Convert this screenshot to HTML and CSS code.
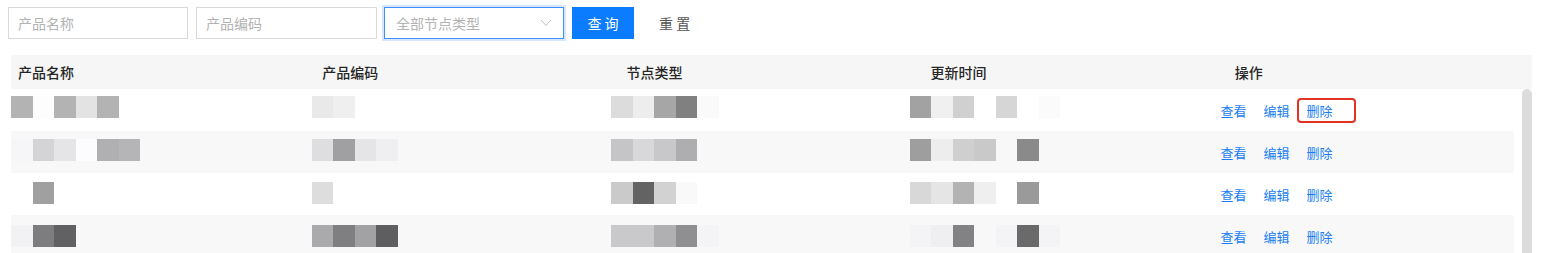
FILE: index.html
```html
<!DOCTYPE html>
<html lang="zh-CN">
<head>
    <meta charset="UTF-8">
    <meta name="viewport" content="width=device-width, initial-scale=1.0">
    <title>产品列表</title>
    <link rel="stylesheet" href="styles.css">
</head>
<body>
    <div class="search">
        <input class="field" type="text" placeholder="产品名称">
        <input class="field" type="text" placeholder="产品编码">
        <div class="select">
            <span>全部节点类型</span>
            <svg class="arrow" width="12" height="8" viewBox="0 0 12 8"><polyline points="1,1 6,6.5 11,1" fill="none" stroke="#c0c0c0" stroke-width="1"/></svg>
        </div>
        <button class="btn-query">查 询</button>
        <button class="btn-reset">重 置</button>
    </div>

    <div class="table">
        <div class="thead">
            <div>产品名称</div>
            <div>产品编码</div>
            <div>节点类型</div>
            <div>更新时间</div>
            <div>操作</div>
        </div>
        <div class="body-wrap">
            <div class="tbody" id="tbody"></div>
            <div class="scrollbar"></div>
        </div>
    </div>

    <script>
        // data is masked in the screenshot, so each cell is a row of grey mosaic tiles
        var rows = [
            [
                ['#b3b3b3', '#fdfdfd', '#b3b3b3', '#e3e3e3', '#b3b3b3'],
                ['#e9e9e9', '#efefef'],
                ['#dcdcdc', '#ededed', '#a6a6a6', '#808080', '#fafafa'],
                ['#a2a2a2', '#f0f0f0', '#d0d0d0', '', '#d6d6d6', '', '#fbfbfb']
            ],
            [
                ['#f6f6f8', '#d4d4d6', '#e5e5e7', '#fcfcfe', '#b0b0b2', '#b5b5b7'],
                ['#dedee0', '#a0a0a2', '#e5e5e7', '#efeff1'],
                ['#c5c5c7', '#d8d8da', '#c8c8ca', '#aeaeb0'],
                ['#9e9e9e', '#ededed', '#cfcfcf', '#c9c9c9', '', '#8a8a8a']
            ],
            [
                ['', '#a0a0a0'],
                ['#dddddd'],
                ['#cacaca', '#636363', '#d2d2d2', '#f9f9f9'],
                ['#d8d8d8', '#e5e5e5', '#b3b3b3', '#efefef', '', '#9a9a9a']
            ],
            [
                ['#f2f2f4', '#7d7d7f', '#616163'],
                ['#aaaaac', '#7f7f81', '#a2a2a4', '#5e5e60'],
                ['#c9c9cb', '#c9c9cb', '#b0b0b2', '#8f8f91', '#f4f4f6'],
                ['#f4f4f6', '#efeff1', '#828284', '', '#f4f4f6', '#6a6a6a', '#f4f4f6']
            ]
        ];

        var tbody = document.getElementById('tbody');

        rows.forEach(function(row, r) {
            var tr = document.createElement('div');
            tr.className = 'tr';

            row.forEach(function(tiles) {
                var cell = document.createElement('div');
                cell.className = 'cell';
                var mosaic = document.createElement('div');
                mosaic.className = 'mosaic';
                tiles.forEach(function(color) {
                    var tile = document.createElement('i');
                    if (color) tile.style.background = color;
                    mosaic.appendChild(tile);
                });
                cell.appendChild(mosaic);
                tr.appendChild(cell);
            });

            var actions = document.createElement('div');
            actions.className = 'cell actions';
            actions.innerHTML = '<a>查看</a><a>编辑</a><a class="del' + (r === 0 ? ' marked' : '') + '">删除</a>';
            tr.appendChild(actions);

            tbody.appendChild(tr);
        });
    </script>
</body>
</html>
```

FILE: styles.css
```css
body {
    margin: 0;
    font-family: "Noto Sans CJK SC", "Noto Sans", sans-serif;
    color: #333;
    background: #fff;
    overflow: hidden;
}
.search {
    display: flex;
    align-items: center;
    padding: 7px 0 0 8px;
    height: 32px;
}
.field {
    box-sizing: border-box;
    width: 180px;
    height: 32px;
    border: 1px solid #d9d9d9;
    padding: 0 9px;
    margin-right: 8px;
    font-family: inherit;
    font-size: 14px;
    outline: none;
}
.field:nth-child(2) {
    width: 181px;
    margin-right: 7px;
}
.field::placeholder {
    color: #b3b3b3;
}
.select {
    box-sizing: border-box;
    width: 180px;
    height: 32px;
    border: 1px solid #3e8efc;
    box-shadow: 0 0 0 2px #d5e6fd;
    display: flex;
    align-items: center;
    justify-content: space-between;
    padding: 0 11px;
    margin-right: 8px;
    font-size: 14px;
    color: #b3b3b3;
}
.btn-query {
    width: 62px;
    height: 32px;
    border: 0;
    background: #0a7cfd;
    color: #fff;
    font-family: inherit;
    font-size: 14px;
    padding: 0;
}
.btn-reset {
    height: 32px;
    border: 0;
    background: none;
    color: #555;
    font-family: inherit;
    font-size: 14px;
    padding: 0 0 0 25px;
}
.table {
    margin: 16px 0 0 11px;
    width: 1521px;
}
.thead {
    display: grid;
    grid-template-columns: repeat(5, 1fr);
    height: 34px;
    align-items: center;
    background: #f6f6f6;
    font-size: 14px;
    font-weight: 500;
    color: #262626;
}
.thead div {
    padding-left: 7px;
}
.body-wrap {
    display: flex;
}
.tbody {
    width: 1503px;
}
.tr {
    display: grid;
    grid-template-columns: repeat(5, 1fr);
    height: 42px;
}
.tr:nth-child(even) {
    background: #f8f8f9;
}
.cell {
    display: flex;
    align-items: flex-start;
}
.mosaic {
    display: flex;
    margin-top: 8px;
}
.cell:nth-child(3) .mosaic {
    margin-left: -1px;
}
.cell:nth-child(4) .mosaic {
    margin-left: -3px;
}
.tr:first-child .mosaic {
    margin-top: 7px;
}
.tr:nth-child(3) .mosaic {
    margin-top: 9px;
}
.tr:nth-child(4) .mosaic {
    margin-top: 10px;
}
.mosaic i {
    display: block;
    width: 21.5px;
    height: 22px;
}
.actions {
    align-items: center;
    padding-left: 7px;
    font-size: 13px;
}
.actions a {
    color: #1a7ef2;
    margin-right: 17px;
    cursor: pointer;
}
.del {
    position: relative;
}
.marked::after {
    content: "";
    position: absolute;
    left: -9px;
    right: -24px;
    top: -3px;
    bottom: -3px;
    border: 2px solid #e3321f;
    border-radius: 4px;
}
.scrollbar {
    width: 10px;
    margin-left: 8px;
    height: 180px;
    background: #dcdcdc;
    border-radius: 5px 5px 0 0;
}
```
